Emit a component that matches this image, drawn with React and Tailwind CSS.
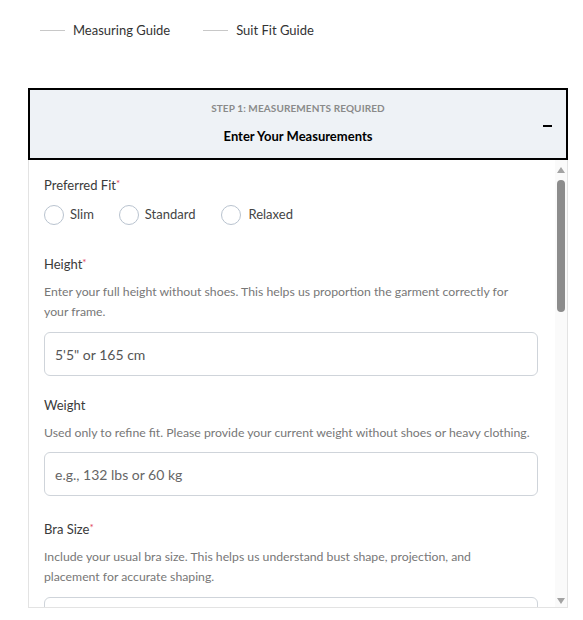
export default function App() {
  return (
    <div className="min-h-screen bg-white font-['Lato',sans-serif] text-[#333]">
      <div className="flex items-center pl-10 pt-[21px]">
        <span className="h-px w-[25px] bg-[#c8c8c8]" />
        <span className="ml-2 text-[13px] leading-[18px] text-[#333]">Measuring Guide</span>
        <span className="ml-[33px] h-px w-[25px] bg-[#c8c8c8]" />
        <span className="ml-2 text-[13px] leading-[18px] text-[#333]">Suit Fit Guide</span>
      </div>

      <div className="ml-7 mt-[49px] w-[540px]">
        <div className="relative flex h-[72px] flex-col items-center border-2 border-black bg-[#eef2f6]">
          <p className="mt-[11px] text-[10px] font-bold uppercase leading-[14px] tracking-[0.01em] text-[#8a8a8a]">
            Step 1: Measurements Required
          </p>
          <p className="mt-[12px] text-[13px] font-bold leading-[18px] text-black">Enter Your Measurements</p>
          <span className="absolute right-[14px] top-[35px] h-[2px] w-[9px] bg-black" />
        </div>

        <div className="flex h-[448px] border-b border-l border-r border-[#e3e3e3]">
          <div className="flex-1 overflow-hidden pl-[15px] pr-[17px] pt-4">
            <p className="text-[13px] leading-[18px] text-[#3a3a3a]">
              Preferred Fit<span className="align-top text-[10px] leading-[14px] text-[#e0435a]">*</span>
            </p>
            <div className="mt-[11px] flex items-center">
              <span className="h-5 w-5 rounded-full border border-[#b9c3cf]" />
              <span className="ml-[6px] text-[13px] text-[#444]">Slim</span>
              <span className="ml-[25px] h-5 w-5 rounded-full border border-[#b9c3cf]" />
              <span className="ml-[6px] text-[13px] text-[#444]">Standard</span>
              <span className="ml-[26px] h-5 w-5 rounded-full border border-[#b9c3cf]" />
              <span className="ml-[7px] text-[13px] text-[#444]">Relaxed</span>
            </div>

            <p className="mt-[30px] text-[13px] leading-[18px] text-[#3a3a3a]">
              Height<span className="align-top text-[10px] leading-[14px] text-[#e0435a]">*</span>
            </p>
            <p className="mt-[9px] text-[12.25px] leading-[20px] text-[#777]">
              Enter your full height without shoes. This helps us proportion the garment correctly for
              <br />
              your frame.
            </p>
            <div className="mt-[10px] flex h-[44px] items-center rounded-md border border-[#cfd4da] px-[10px] text-[14px] text-[#555]">
              5'5" or 165 cm
            </div>

            <p className="mt-[20px] text-[13px] leading-[18px] text-[#3a3a3a]">Weight</p>
            <p className="mt-[9px] text-[12.25px] leading-[20px] text-[#777]">
              Used only to refine fit. Please provide your current weight without shoes or heavy clothing.
            </p>
            <div className="mt-[9px] flex h-[44px] items-center rounded-md border border-[#cfd4da] px-[10px] text-[14px] text-[#666]">
              e.g., 132 lbs or 60 kg
            </div>

            <p className="mt-[24px] text-[13px] leading-[18px] text-[#3a3a3a]">
              Bra Size<span className="align-top text-[10px] leading-[14px] text-[#e0435a]">*</span>
            </p>
            <p className="mt-[9px] text-[12.25px] leading-[20px] text-[#777]">
              Include your usual bra size. This helps us understand bust shape, projection, and
              <br />
              placement for accurate shaping.
            </p>
            <div className="mt-[10px] h-[44px] rounded-md border border-[#cfd4da]" />
          </div>

          <div className="flex w-3 flex-col items-center bg-[#fafafa]">
            <svg className="mt-[7px]" width="8" height="6" viewBox="0 0 8 6">
              <path d="M4 0 L8 6 L0 6 Z" fill="#a3a3a3" />
            </svg>
            <span className="mt-[7px] h-[132px] w-2 rounded-full bg-[#8c8c8c]" />
            <span className="flex-1" />
            <svg className="mb-[3px]" width="8" height="6" viewBox="0 0 8 6">
              <path d="M0 0 L8 0 L4 6 Z" fill="#a3a3a3" />
            </svg>
          </div>
        </div>
      </div>
    </div>
  );
}
